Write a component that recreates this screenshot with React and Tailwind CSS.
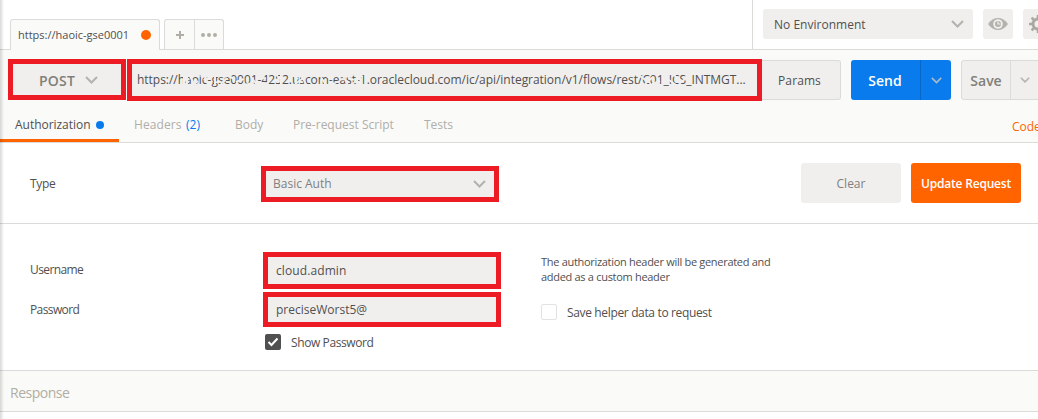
import React from "react";

function Chevron({ className = "", width = 13, height = 8 }) {
  return (
    <svg className={className} width={width} height={height} viewBox="0 0 13 8" fill="none" stroke="currentColor" strokeWidth="2">
      <path d="M1 1 L6.5 6.5 L12 1" />
    </svg>
  );
}

function TopBar() {
  return (
    <div className="flex h-[50px] border-b border-[#dbdbd9] bg-white">
      <div className="ml-[10px] mt-[19px] flex h-[31px] w-[150px] shrink-0 items-center rounded-t-[3px] border border-b-0 border-[#dbdbd9] bg-[#fafaf8] pl-[7px] pr-[8px]">
        <span className="flex-1 text-[11px]">https://haoic-gse0001</span>
        <span className="size-[10px] rounded-full bg-[#ff6400]" />
      </div>
      <div className="ml-[4px] mt-[19px] flex h-[30px] w-[60px] shrink-0 rounded-t-[3px] border border-b-0 border-[#dbdbd9] bg-[#fafaf8] text-[#b0aea5]">
        <div className="flex w-[30px] items-center justify-center border-r border-[#dbdbd9]">
          <svg width="8" height="8" viewBox="0 0 8 8" stroke="currentColor" strokeWidth="2"><path d="M4 0V8M0 4H8" /></svg>
        </div>
        <div className="flex flex-1 items-center justify-center gap-[2px]">
          <i className="size-[4px] rounded-full bg-[#b0aea5]" />
          <i className="size-[4px] rounded-full bg-[#b0aea5]" />
          <i className="size-[4px] rounded-full bg-[#b0aea5]" />
        </div>
      </div>
      <div className="ml-auto flex h-[49px] w-[286px] shrink-0 gap-[10px] overflow-hidden border-l border-[#dbdbd9] pl-[10px] pt-[9px]">
        <div className="flex h-[30px] w-[210px] shrink-0 items-center justify-between rounded-[3px] bg-[#f0efed] pl-[11px] pr-[9px]">
          <span className="pt-[2px] tracking-[0.02px]">No Environment</span>
          <Chevron className="text-[#b4b2ad]" />
        </div>
        <div className="flex size-[30px] shrink-0 items-center justify-center rounded-[3px] bg-[#f0efed]">
          <svg width="20" height="12" viewBox="0 0 20 12">
            <path d="M0 6C3 1.8 6.200 0 10 0S17 1.800 20 6C17 10.200 13.800 12 10 12S3 10.200 0 6Z" fill="#b4b2ad" />
            <circle cx="10" cy="6" r="4.800" fill="#f0efed" />
            <circle cx="10" cy="6" r="3" fill="#b4b2ad" />
            <path d="M10 3.500V6H12.500" fill="none" stroke="#f0efed" strokeWidth="1.200" />
          </svg>
        </div>
        <div className="flex size-[30px] shrink-0 items-center justify-center rounded-[3px] bg-[#f0efed]">
          <svg width="18" height="18" viewBox="0 0 18 18" fill="none" stroke="#aaa8a3">
            <circle cx="9" cy="9" r="5" strokeWidth="3" />
            <path d="M9 0V3M9 15V18M0 9H3M15 9H18M2.600 2.600L5 5M13 13L15.400 15.400M2.600 15.400L5 13M13 5L15.400 2.600" strokeWidth="2.600" />
          </svg>
        </div>
      </div>
    </div>
  );
}

/* Strokes that partly rub out the host and flow names. */
function Redaction() {
  return (
    <svg className="absolute left-0 top-0" width="625" height="32" viewBox="0 0 625 32" fill="none" stroke="#f0efed" strokeWidth="2">
      <path d="M52 9V21M55 9V21M58 12L62 20M61 21L66 17M68 10L74 13L72 16M74 21L80 17M83 10V21M89 20L95 14M98 13L103 15M104 18L112 15M112 21L121 19M119 13L125 21M127 15L134 14M133 21L139 15M139 9L146 12M144 16L151 13M149 8V21" />
      <path d="M159 9L166 15M163 20L174 12M168 10L174 20M189 13L194 21M194 12L201 16M201 20L207 17M211 12L216 21M216 13L222 16M220 20L226 16M223 9L231 13" strokeWidth="1.700" />
      <path d="M508 12L516 18M513 20L521 13M520 20L528 17M537 16L544 21M541 10L549 18M547 20L553 15" />
    </svg>
  );
}

function RequestBar() {
  return (
    <div className="flex h-[52px] items-start pl-[8px] pt-[9px]">
      <div className="flex h-[41px] w-[118px] shrink-0 items-center border-[5px] border-[#ed1c24] bg-[#f0efed] pl-[26px] pt-[2px] text-[14px] font-semibold text-[#808078]">
        <span className="w-[46px] tracking-[0.2px]">POST</span>
        <Chevron className="-mt-[2px] text-[#b4b2ad]" />
      </div>
      <div className="relative ml-px flex h-[42px] w-[635px] shrink-0 items-center border-[5px] border-[#ed1c24] bg-[#f0efed] pl-[5px]">
        <span className="tracking-[-0.03px]">https://haoic-gse0001-4252.uscom-east-1.oraclecloud.com/ic/api/integration/v1/flows/rest/C01_ICS_INTMGT...</span>
        <Redaction />
      </div>
      <div className="mt-px flex h-[40px] w-[79px] shrink-0 items-center justify-center rounded-r-[3px] border border-l-0 border-[#dbdbd9] bg-[#f0efed] pr-[3px] pt-[2px]">
        <span className="tracking-[0.1px]">Params</span>
      </div>
      <div className="ml-[10px] mt-px flex h-[40px] w-[100px] shrink-0 rounded-[3px] bg-[#097bed] text-white">
        <div className="flex w-[70px] items-center justify-center border-r border-[#0768c9] pr-px text-[14px] font-semibold">Send</div>
        <div className="flex flex-1 items-center justify-center"><Chevron className="text-[#a9b8c9]" width={11} height={7} /></div>
      </div>
      <div className="ml-[10px] mt-px flex h-[40px] w-[80px] shrink-0 rounded-[3px] border border-[#dbdbd9] bg-[#f0efed]">
        <div className="flex w-[49px] items-center justify-center border-r border-[#dbdbd9] text-[14px] font-semibold text-[#808078]">Save</div>
        <div className="flex items-center pl-[9px]"><Chevron className="-mt-px text-[#b4b2ad]" width={10} height={6} /></div>
      </div>
    </div>
  );
}

function RequestTabs() {
  return (
    <div className="flex h-[41px] border-b border-[#dbdbd9] text-[#b0aea9]">
      <div className="flex h-[40px] w-[119px] shrink-0 items-center border-b-[3px] border-[#ff6400] pl-[15px] pt-[9px] text-[#505050]">
        <span className="w-[81px] tracking-[-0.03px]">Authorization</span>
        <span className="size-[8px] shrink-0 rounded-full bg-[#097bed]" />
      </div>
      <div className="ml-[15px] flex flex-1 pt-[14px] leading-[18px]">
        <span className="w-[52px] tracking-[0.1px]">Headers</span>
        <span className="w-[49px] text-[#097bed]">(2)</span>
        <span className="w-[58px]">Body</span>
        <span className="w-[131px]">Pre-request Script</span>
        <span>Tests</span>
        <span className="ml-auto -mr-[1px] w-[27px] shrink-0 pt-[2px] text-[#ff6400]">Code</span>
      </div>
    </div>
  );
}

function AuthType() {
  return (
    <div className="flex h-[81px] items-start border-b border-[#dbdbd9] pl-[30px] pt-[20px]">
      <span className="mt-[12px] w-[231px] shrink-0 leading-[18px] tracking-[-0.3px]">Type</span>
      <div className="mt-[3px] flex h-[36px] w-[238px] shrink-0 items-center justify-between border-[5px] border-[#ed1c24] bg-[#f0efed] pl-[7px] pr-[8px] text-[#808080]">
        <span>Basic Auth</span>
        <Chevron className="text-[#b4b2ad]" />
      </div>
      <div className="ml-[302px] flex h-[40px] w-[100px] shrink-0 items-center justify-center rounded-[3px] bg-[#f0efed] pt-px text-[#808080]">Clear</div>
      <div className="ml-[10px] flex h-[40px] w-[110px] shrink-0 items-center justify-center rounded-[3px] bg-[#ff6400] pt-px font-semibold tracking-[-0.2px] text-white">Update Request</div>
    </div>
  );
}

function Credentials() {
  return (
    <div className="flex h-[147px] border-b border-[#dbdbd9] pl-[30px]">
      <div className="flex w-[233px] shrink-0 flex-col gap-[22px] pt-[37px] leading-[18px] tracking-[-0.6px]">
        <span>Username</span>
        <span>Password</span>
      </div>
      <div className="flex w-[238px] shrink-0 flex-col pt-[28px]">
        <div className="flex h-[37px] items-center border-[5px] border-[#ed1c24] bg-[#f0efed] pl-[8px]"><span className="tracking-[0.1px]">cloud.admin</span></div>
        <div className="mt-[3px] flex h-[35px] items-center border-[5px] border-[#ed1c24] bg-[#f0efed] pl-[8px]"><span>preciseWorst5@</span></div>
        <div className="ml-[2px] mt-[7px] flex h-[16px] items-center">
          <span className="flex size-[16px] items-center justify-center rounded-[2px] bg-[#505050]">
            <svg width="12" height="10" viewBox="0 0 12 10" fill="none" stroke="white" strokeWidth="2"><path d="M1.500 5L4.500 8L10.500 1.500" /></svg>
          </span>
          <span className="ml-[10px] mt-[2px] tracking-[-0.4px]">Show Password</span>
        </div>
      </div>
      <div className="ml-[40px] flex flex-col pt-[30px]">
        <span className="w-[260px] text-[11px] leading-[15px] tracking-[-0.3px]">The authorization header will be generated and<br />added as a custom header</span>
        <div className="mt-[20px] flex h-[16px] items-center">
          <span className="size-[16px] rounded-[2px] border border-[#e3e3e1] bg-white" />
          <span className="ml-[10px] mt-[2px] tracking-[-0.35px]">Save helper data to request</span>
        </div>
      </div>
    </div>
  );
}

export default function App() {
  return (
    <div className="relative h-[419px] w-[1038px] overflow-hidden whitespace-nowrap bg-white font-['Open_Sans',sans-serif] text-[12px] text-[#505050]">
      <TopBar />
      <div className="bg-[#fafaf8]">
        <RequestBar />
        <RequestTabs />
      </div>
      <AuthType />
      <Credentials />
      <div className="flex h-[41px] items-center border-b border-[#dbdbd9] bg-[#fafaf8] pl-[10px] pt-[2px] text-[14px] tracking-[-0.5px] text-[#b0aea5]">Response</div>
      <div className="pointer-events-none absolute inset-y-0 left-0 w-[4px] bg-linear-to-r from-black/15 to-transparent" />
    </div>
  );
}
